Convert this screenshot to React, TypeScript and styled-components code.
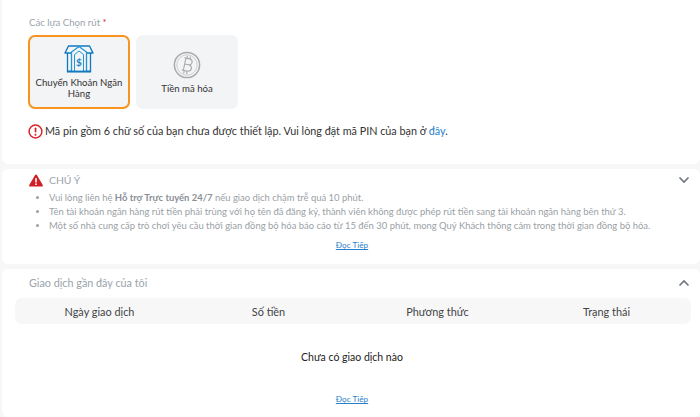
import React from "react";
import styled, { createGlobalStyle } from "styled-components";

const GlobalStyle = createGlobalStyle`
  html, body {
    margin: 0;
    padding: 0;
    background: #f7f7f7;
    font-family: "Lato", "Noto Sans", sans-serif;
    overflow: hidden;
  }
`;

const Page = styled.div`
  width: 700px;
  height: 417px;
  display: flex;
  flex-direction: column;
  gap: 5px;
  padding-left: 2px;
  box-sizing: border-box;
  overflow: hidden;
`;

const Panel = styled.section<{ $height: number }>`
  background: #fff;
  border-radius: 6px;
  height: ${(p) => p.$height}px;
  flex: none;
  box-sizing: border-box;
`;

const TopPanel = styled(Panel)`
  padding: 16px 0 0 26px;
  border-top-left-radius: 0;
  border-top-right-radius: 0;
`;

const FieldLabel = styled.div`
  margin-left: 1px;
  font-size: 9.6px;
  line-height: 14px;
  color: #9aa3ab;
  span { color: #e02b2b; }
`;

const Options = styled.div`
  display: flex;
  gap: 6px;
  margin-top: 5px;
`;

const OptionCard = styled.div<{ $active?: boolean }>`
  width: 102px;
  height: 74px;
  box-sizing: border-box;
  border-radius: 7px;
  background: #f3f4f6;
  border: 2px solid ${(p) => (p.$active ? "#f7931e" : "#f3f4f6")};
  display: flex;
  flex-direction: column;
  align-items: center;
  justify-content: center;
  text-align: center;
  font-size: 9.6px;
  line-height: 11px;
  color: #333;
  gap: 4px;
`;

const Warning = styled.div`
  display: flex;
  align-items: center;
  gap: 2px;
  margin-top: 14px;
  font-size: 10.8px;
  line-height: 16px;
  color: #333;
  a { color: #2a7fc9; text-decoration: none; }
`;

const NoticePanel = styled(Panel)`
  padding: 3px 0 0;
`;

const PanelHead = styled.div`
  display: flex;
  align-items: center;
  justify-content: space-between;
  padding: 0 10px 0 27px;
`;

const NoticeTitle = styled.div`
  display: flex;
  align-items: center;
  gap: 6px;
  font-size: 10.4px;
  color: #9aa3ab;
  line-height: 16px;
`;

const NoticeList = styled.ul`
  margin: 3px 0 0;
  padding: 0 0 0 47px;
  font-size: 9.45px;
  line-height: 14px;
  color: #9a9fa6;
  li::marker { font-size: 9px; }
  b { font-weight: 700; color: #8a8f96; }
`;

const ReadMore = styled.a<{ $top?: number }>`
  display: block;
  margin-top: ${(p) => p.$top ?? 0}px;
  padding-left: 2px;
  text-align: center;
  font-size: 8.2px;
  line-height: 10px;
  color: #2a7fc9;
  text-decoration: underline;
`;

const HistoryPanel = styled(Panel)`
  padding: 6px 0 0;
`;

const HistoryTitle = styled.div`
  font-size: 10.8px;
  line-height: 16px;
  color: #9aa3ab;
`;

const TableHead = styled.div`
  display: grid;
  grid-template-columns: repeat(4, 1fr);
  height: 26px;
  margin: 7px 9px 0 13px;
  border-radius: 7px;
  background: #f7f7f8;
  align-items: center;
  text-align: center;
  font-size: 10.9px;
  color: #444;
`;

const EmptyRow = styled.div`
  padding-left: 2px;
  text-align: center;
  font-size: 10.5px;
  line-height: 16px;
  color: #222;
  margin-top: 25px;
`;

const Chevron = ({ up }: { up?: boolean }) => (
  <svg width="12" height="8" viewBox="0 0 12 8" fill="none">
    <path
      d={up ? "M1.5 6.5 6 2l4.5 4.5" : "M1.5 1.5 6 6l4.5-4.5"}
      stroke="#6f757b"
      strokeWidth="1.6"
    />
  </svg>
);

const BankIcon = () => (
  <svg width="30" height="28" viewBox="0 0 30 28" fill="none">
    <path d="M4.5 1h21l3.5 7H1z" stroke="#1378bd" strokeWidth="1.4" strokeLinejoin="round" />
    <path d="M3.5 8v18.5h23V8" stroke="#1378bd" strokeWidth="1.3" />
    <path d="M7.5 26V7L15 1.5 22.5 7v19" stroke="#1c96d4" strokeWidth="1.3" fill="#f3f4f6" />
    <path d="M10.5 26V9.5L15 6l4.5 3.5V26" stroke="#1c96d4" strokeWidth="1" />
    <path d="M3 26.5h24" stroke="#1378bd" strokeWidth="1.8" />
    <text
      x="15"
      y="20.5"
      textAnchor="middle"
      fontSize="10"
      fontWeight="700"
      fontFamily="Lato, sans-serif"
      fill="#1b85c8"
    >
      $
    </text>
  </svg>
);

const CoinIcon = () => (
  <svg width="28" height="28" viewBox="0 0 28 28" fill="none" stroke="#a9a9ab">
    <circle cx="14" cy="14" r="12.6" strokeWidth="1.5" />
    <circle cx="14" cy="14" r="10.2" strokeWidth="0.5" />
    <g transform="rotate(12 14 14)" strokeWidth="1.1">
      <path d="M10 7.5h5.2c2 0 3.2 1.2 3.2 3s-1.2 3-3.2 3c2.4 0 3.8 1.3 3.8 3.2s-1.4 3.3-3.8 3.3H10" />
      <path d="M11.5 7.5v13M11.5 13.5h4M12.5 5v2.5M15.5 5v2.5M12.5 20.5V23M15.5 20.5V23" />
    </g>
  </svg>
);

const AlertCircle = () => (
  <svg width="15" height="15" viewBox="0 0 15 15" fill="none">
    <circle cx="7.5" cy="7.5" r="6.4" stroke="#d7252c" strokeWidth="1.5" />
    <rect x="6.7" y="3.4" width="1.7" height="5.2" rx="0.8" fill="#d7252c" />
    <circle cx="7.5" cy="10.7" r="1" fill="#d7252c" />
  </svg>
);

const AlertTriangle = () => (
  <svg width="14" height="13" viewBox="0 0 14 13">
    <path d="M7 .6c.4 0 .7.2.9.5l5.8 10c.4.7 0 1.5-.9 1.5H1.2c-.9 0-1.3-.8-.9-1.5l5.8-10c.2-.3.5-.5.9-.5z" fill="#d21f26" />
    <rect x="6.2" y="4" width="1.6" height="4.6" rx="0.6" fill="#fff" />
    <circle cx="7" cy="10.2" r="0.9" fill="#fff" />
  </svg>
);

const columns = ["Ngày giao dịch", "Số tiền", "Phương thức", "Trạng thái"];

export default function App() {
  return (
    <>
      <GlobalStyle />
      <Page>
        <TopPanel $height={164}>
          <FieldLabel>
            Các lựa Chọn rút <span>*</span>
          </FieldLabel>
          <Options>
            <OptionCard $active>
              <BankIcon />
              <div>Chuyển Khoản Ngân Hàng</div>
            </OptionCard>
            <OptionCard>
              <CoinIcon />
              <div>Tiền mã hóa</div>
            </OptionCard>
          </Options>
          <Warning>
            <AlertCircle />
            <span>
              Mã pin gồm 6 chữ số của bạn chưa được thiết lập. Vui lòng đặt mã PIN của bạn ở <a>đây</a>.
            </span>
          </Warning>
        </TopPanel>
        <NoticePanel $height={95}>
          <PanelHead>
            <NoticeTitle>
              <AlertTriangle />
              CHÚ Ý
            </NoticeTitle>
            <Chevron />
          </PanelHead>
          <NoticeList>
            <li>
              Vui lòng liên hệ <b>Hỗ trợ Trực tuyến 24/7</b> nếu giao dịch chậm trễ quá 10 phút.
            </li>
            <li>
              Tên tài khoản ngân hàng rút tiền phải trùng với họ tên đã đăng ký, thành viên không được phép rút tiền sang tài khoản ngân hàng bên thứ 3.
            </li>
            <li>
              Một số nhà cung cấp trò chơi yêu cầu thời gian đồng bộ hóa báo cáo từ 15 đến 30 phút, mong Quý Khách thông cảm trong thời gian đồng bộ hóa.
            </li>
          </NoticeList>
          <ReadMore $top={7}>Đọc Tiếp</ReadMore>
        </NoticePanel>
        <HistoryPanel $height={148}>
          <PanelHead>
            <HistoryTitle>Giao dịch gần đây của tôi</HistoryTitle>
            <Chevron up />
          </PanelHead>
          <TableHead>
            {columns.map((c) => (
              <div key={c}>{c}</div>
            ))}
          </TableHead>
          <EmptyRow>Chưa có giao dịch nào</EmptyRow>
          <ReadMore $top={29}>Đọc Tiếp</ReadMore>
        </HistoryPanel>
      </Page>
    </>
  );
}
